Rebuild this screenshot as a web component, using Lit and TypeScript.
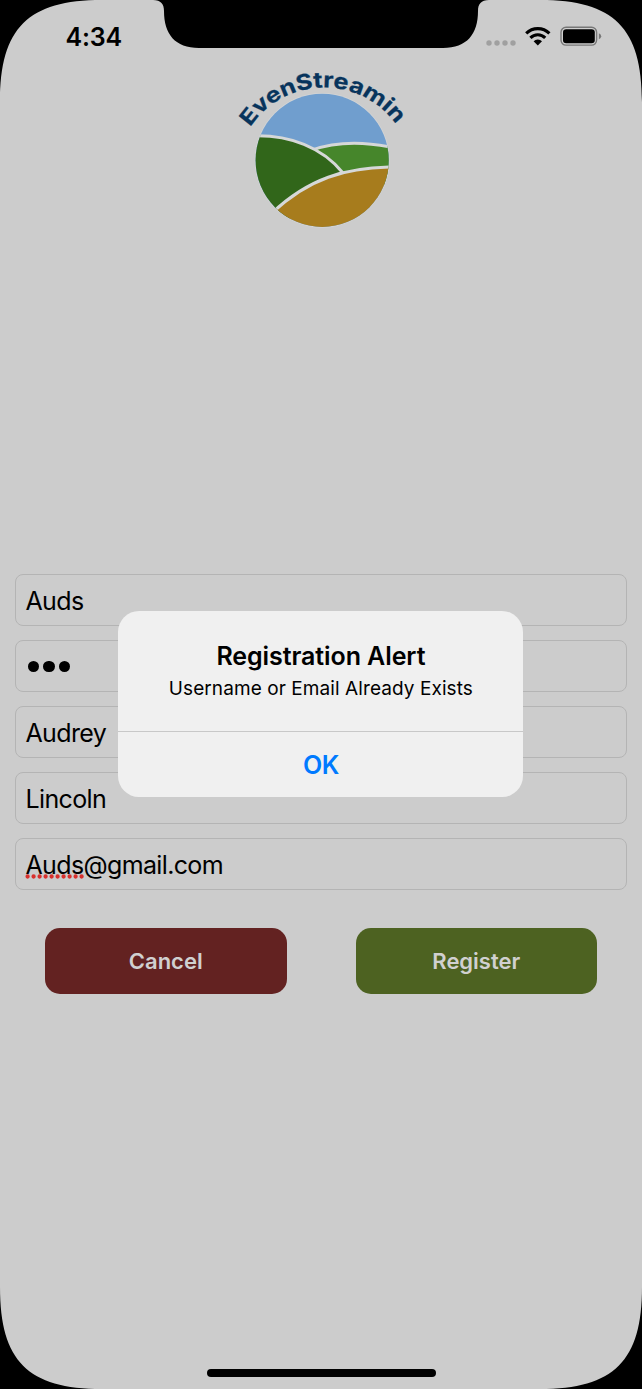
import { LitElement, html, css, svg } from "lit";
import { customElement } from "lit/decorators.js";

@customElement("stream-logo")
class StreamLogo extends LitElement {
  static styles = css`
    :host { display: block; width: 195px; height: 180px; }
    svg { display: block; }
    .arc { font: 700 21.5px Inter, "Open Sans", sans-serif; fill: #07345c; stroke: #07345c; stroke-width: 0.25px; }
  `;
  render() {
    return html`<svg width="195" height="180" viewBox="0 0 195 180">
      <defs>
        <clipPath id="disc"><circle cx="97.2" cy="100.3" r="66.6" /></clipPath>
        <path id="curve" d="M25.2 67.2 A88.5 88.5 0 0 1 172.6 66.8 L176 72" />
      </defs>
      <circle cx="97.2" cy="100.3" r="67.4" fill="#d3d5d6" />
      <g clip-path="url(#disc)">
        <rect x="25" y="30" width="145" height="145" fill="#709ece" />
        <path d="M88 89.5 C112 81 143 82 170 88 V125 H88Z" fill="#46862b" />
        <path d="M86 90.3 C112 81 143 82 170 88" fill="none" stroke="#d6d8d8" stroke-width="3" />
        <path d="M25 76 C65 74 98 88 118 113 L90 150 L30 170Z" fill="#31661a" />
        <path d="M25 76 C65 74 98 88 118 113" fill="none" stroke="#d6d8d8" stroke-width="3" />
        <path d="M47 153 C83 119 120 107 170 107 V180 H47Z" fill="#a77c1d" />
        <path d="M47 153 C83 119 120 107 170 107" fill="none" stroke="#d6d8d8" stroke-width="3" />
      </g>
      <text class="arc"><textPath href="#curve" textLength="171" lengthAdjust="spacingAndGlyphs">EvenStreamin</textPath></text>
    </svg>`;
  }
}

@customElement("status-icons")
class StatusIcons extends LitElement {
  static styles = css`
    :host { display: block; }
    svg { display: block; }
  `;
  render() {
    return html`<svg width="118" height="22" viewBox="484 25 118 22">
      ${[489, 497, 505, 513].map((x) => svg`<circle cx=${x} cy="43" r="2.7" fill="#a0a0a0" />`)}
      <g fill="none" stroke="#000" stroke-width="3.1">
        <path d="M526.2 33.4 A16.5 16.5 0 0 1 549.4 33.4" />
        <path d="M530.4 37.8 A10.5 10.5 0 0 1 545.2 37.8" />
      </g>
      <path d="M533.6 41.3 A6 6 0 0 1 542 41.3 L537.8 45.6Z" fill="#000" />
      <rect x="561" y="27.3" width="35.6" height="17.8" rx="5" fill="#d0d0d0" stroke="#777" stroke-width="1.4" />
      <rect x="563" y="29.2" width="31.8" height="14" rx="3.2" fill="#000" />
      <path d="M598.9 33.2 Q601.2 34.2 601.2 36.2 T598.9 39.2Z" fill="#777" />
    </svg>`;
  }
}

@customElement("app-root")
class AppRoot extends LitElement {
  static styles = css`
    :host { display: block; font-family: Inter, "Liberation Sans", sans-serif; color: #000; }
    .screen { position: relative; display: flex; flex-direction: column; width: 642px; height: 1389px; background: #cccccc; overflow: hidden; }
    .status { display: flex; justify-content: space-between; height: 60px; padding: 0 40px 0 65.5px; box-sizing: border-box; }
    .time { padding-top: 21px; font-size: 25px; font-weight: 600; line-height: 32px; letter-spacing: -0.2px; }
    status-icons { padding-top: 25px; }
    .logo { padding-left: 225px; height: 514px; }
    form { display: flex; flex-direction: column; gap: 14px; padding: 0 15px; }
    .field { display: flex; align-items: center; height: 52px; box-sizing: border-box; border: 1px solid #b4b4b4; border-radius: 8px; padding: 1px 9.5px 0; font-size: 25px; line-height: 30px; letter-spacing: -0.64px; }
    .dots { display: flex; gap: 4px; padding: 0 0 0 2.5px; }
    .dot { width: 11.4px; height: 11.4px; border-radius: 50%; background: #000; }
    .misspelt { position: relative; }
    .squiggle { position: absolute; left: -0.5px; top: 24px; display: block; }
    .actions { display: flex; justify-content: space-between; padding: 38.4px 45px 0; }
    .btn { display: flex; align-items: center; justify-content: center; width: 241.5px; height: 66px; border-radius: 15px; color: #d0d0d0; font-size: 22px; font-weight: 600; letter-spacing: -0.02px; }
    .cancel { background: #632221; }
    .register { background: #4d6221; }
    .alert { position: absolute; left: 118.4px; top: 611px; width: 405px; height: 186.4px; border-radius: 21px; background: #f0f0f0; display: flex; flex-direction: column; text-align: center; overflow: hidden; }
    .message { height: 121px; box-sizing: border-box; padding-top: 30px; border-bottom: 1px solid #c8c8c8; }
    .title { font-size: 25px; font-weight: 600; line-height: 31px; letter-spacing: -0.08px; }
    .text { font-size: 19px; line-height: 24px; padding-top: 5px; letter-spacing: 0.08px; }
    .ok { flex: 1; display: flex; align-items: center; justify-content: center; color: #007aff; font-size: 25px; font-weight: 600; letter-spacing: -0.6px; padding-top: 1px; }
    .bezel { position: absolute; inset: 0; }
    .home { position: absolute; left: 206.5px; top: 1369px; width: 229.5px; height: 8px; border-radius: 4px; background: #000; }
  `;
  render() {
    return html`<main class="screen">
      <div class="status"><div class="time">4:34</div><status-icons></status-icons></div>
      <div class="logo"><stream-logo></stream-logo></div>
      <form>
        <div class="field">Auds</div>
        <div class="field"><div class="dots">${[0, 1, 2].map(() => html`<i class="dot"></i>`)}</div></div>
        <div class="field">Audrey</div>
        <div class="field">Lincoln</div>
        <div class="field"><span class="misspelt">Auds<svg class="squiggle" width="60" height="5" viewBox="0 0 60 5"><path d="M2.6 2.5H57" stroke="#d8302c" stroke-width="4.3" stroke-linecap="round" stroke-dasharray="0 6" /></svg></span><span>@gmail.com</span></div>
      </form>
      <div class="actions">
        <div class="btn cancel">Cancel</div>
        <div class="btn register">Register</div>
      </div>
      <section class="alert">
        <div class="message">
          <div class="title">Registration Alert</div>
          <div class="text">Username or Email Already Exists</div>
        </div>
        <div class="ok">OK</div>
      </section>
      <svg class="bezel" width="642" height="1389" viewBox="0 0 642 1389">
        <path d="M0 0H102C28 0 0 28 0 102Z M642 0H540C614 0 642 28 642 102Z M0 1389H102C28 1389 0 1361 0 1287Z M642 1389H540C614 1389 642 1361 642 1287Z" />
        <path d="M153 0C161 0 164 4 164 11C164 34 175 48 199 48H443C467 48 478 34 478 11C478 4 481 0 489 0Z" />
      </svg>
      <div class="home"></div>
    </main>`;
  }
}
